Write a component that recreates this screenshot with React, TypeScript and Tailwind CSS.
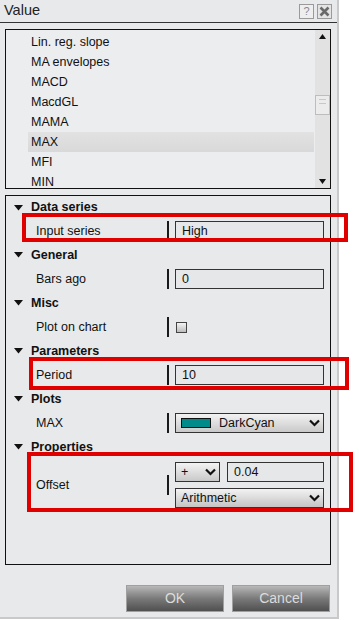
import React from "react";

const font = { fontFamily: '"Liberation Sans", Arial, sans-serif' };

function Chevron({ className = "" }: { className?: string }) {
  return (
    <svg width="11" height="8" viewBox="0 0 11 8" className={className}>
      <path d="M1 1.5 L5.5 6 L10 1.5" fill="none" stroke="#111" strokeWidth="2.2" />
    </svg>
  );
}

function Tri() {
  return (
    <svg width="9" height="6" viewBox="0 0 9 6">
      <path d="M0 0 L9 0 L4.5 5.5 Z" fill="#111" />
    </svg>
  );
}

function Header({ label, h = "h-[24px]" }: { label: string; h?: string }) {
  return (
    <div className={`flex items-center ${h}`}>
      <div className="w-[25px] flex justify-end pr-[8px]">
        <Tri />
      </div>
      <span className="font-bold text-[12.5px] text-[#111]">{label}</span>
    </div>
  );
}

function Row({ label, children, h = "h-[24px]" }: { label: string; children: React.ReactNode; h?: string }) {
  return (
    <div className={`flex items-center ${h}`}>
      <div className="w-[161px] pl-[30px] text-[12.5px] text-[#111]">{label}</div>
      <div className="w-[1.5px] h-[20px] bg-[#1a1a1a]" />
      <div className="ml-[6.5px] w-[149px]">{children}</div>
    </div>
  );
}

function Box({ value }: { value: string }) {
  return (
    <div className="h-[20px] border border-[#333] bg-[#e6e7e8] flex items-center pl-[6px] text-[12.5px] text-[#111]">
      {value}
    </div>
  );
}

const items = ["Lin. reg. slope", "MA envelopes", "MACD", "MacdGL", "MAMA", "MAX", "MFI", "MIN"];

export default function App() {
  return (
    <div className="relative w-[359px] h-[620px] bg-white overflow-hidden" style={font}>
      <div className="w-[339px] h-[619px] bg-[#e8e9ea] border-r-2 border-b-2 border-[#c9c9c9] flex flex-col">
        {/* title */}
        <div className="h-[23px] border-b border-[#333] flex items-center justify-between pl-[4px] pr-[5px]">
          <span className="text-[14.5px] text-[#222]">Value</span>
          <div className="flex gap-[3px] mt-[1px]">
            <div className="w-[15px] h-[15px] border border-[#9a9a9a] bg-[#eeeeee] flex items-center justify-center text-[11px] text-[#888]">?</div>
            <div className="w-[15px] h-[15px] border border-[#9a9a9a] bg-[#e4e4e4] flex items-center justify-center">
              <svg width="11" height="11" viewBox="0 0 11 11">
                <path d="M1.5 1.5 L9.5 9.5 M9.5 1.5 L1.5 9.5" stroke="#6a6a6a" strokeWidth="2.6" />
              </svg>
            </div>
          </div>
        </div>

        {/* list */}
        <div className="ml-[5px] mt-[6px] w-[326px] h-[160px] border border-[#111] bg-[#ecedee] flex overflow-hidden">
          <div className="flex-1 pt-[2px] pl-[22px] pr-[1px]">
            {items.map((it) => (
              <div
                key={it}
                className={`h-[20px] flex items-center pl-[3px] text-[12.5px] text-[#111] ${
                  it === "MAX" ? "bg-gradient-to-b from-[#e2e2e2] to-[#d9d9d9]" : ""
                }`}
              >
                {it}
              </div>
            ))}
          </div>
          <div className="w-[15px] bg-[#e2e2e2] flex flex-col items-center justify-between py-[4px]">
            <svg width="7" height="5" viewBox="0 0 7 5">
              <path d="M0 5 L7 5 L3.5 0 Z" fill="#111" />
            </svg>
            <div className="flex-1 w-full relative">
              <div className="absolute left-0 right-0 top-[56px] h-[20px] border border-[#bdbdbd] bg-[#ececec] flex flex-col gap-[3px] pt-[3px] px-[3px]">
                <div className="h-px bg-[#c8c8c8]" />
                <div className="h-px bg-[#c8c8c8]" />
              </div>
            </div>
            <svg width="7" height="5" viewBox="0 0 7 5">
              <path d="M0 0 L7 0 L3.5 5 Z" fill="#111" />
            </svg>
          </div>
        </div>

        {/* property grid */}
        <div className="ml-[5px] mt-[6px] w-[326px] h-[370px] border border-[#111] bg-[#e8e9ea]">
          <Header label="Data series" h="h-[23px]" />
          <Row label="Input series">
            <Box value="High" />
          </Row>
          <Header label="General" />
          <Row label="Bars ago">
            <Box value="0" />
          </Row>
          <Header label="Misc" />
          <Row label="Plot on chart">
            <div className="w-[11px] h-[11px] border border-[#444] bg-gradient-to-b from-[#f4f4f4] to-[#bdbdbd] ml-[1px]" />
          </Row>
          <Header label="Parameters" />
          <Row label="Period">
            <Box value="10" />
          </Row>
          <Header label="Plots" />
          <Row label="MAX">
            <div className="h-[20px] border border-[#333] bg-gradient-to-b from-[#f3f3f3] to-[#c9c9c9] flex items-center pl-[5px] pr-[3px]">
              <div className="w-[30px] h-[10px] border border-[#111] bg-[#008b8b]" />
              <span className="ml-[8px] text-[12.5px] text-[#111] flex-1">DarkCyan</span>
              <Chevron />
            </div>
          </Row>
          <Header label="Properties" />
          <Row label="Offset" h="h-[52px]">
            <div className="flex flex-col gap-[6px]">
              <div className="flex gap-[7px]">
                <div className="w-[45px] h-[20px] border border-[#333] bg-gradient-to-b from-[#f3f3f3] to-[#c9c9c9] flex items-center justify-between pl-[5px] pr-[3px] text-[12.5px] text-[#111]">
                  <span>+</span>
                  <Chevron />
                </div>
                <div className="flex-1">
                  <Box value="0.04" />
                </div>
              </div>
              <div className="h-[20px] border border-[#333] bg-gradient-to-b from-[#f3f3f3] to-[#c4c4c4] flex items-center justify-between pl-[5px] pr-[3px] text-[12.5px] text-[#111]">
                <span>Arithmetic</span>
                <Chevron />
              </div>
            </div>
          </Row>
        </div>

        {/* buttons */}
        <div className="flex justify-end gap-[8px] mt-[20px] pr-[7px]">
          <div className="w-[98px] h-[27px] border border-[#a0a0a0] bg-gradient-to-b from-[#b8b8b8] via-[#7a7a7a] to-[#505050] flex items-center justify-center text-[14px] text-[#dcdcdc]">
            OK
          </div>
          <div className="w-[98px] h-[27px] border border-[#a0a0a0] bg-gradient-to-b from-[#b8b8b8] via-[#7a7a7a] to-[#505050] flex items-center justify-center text-[14px] text-[#dcdcdc]">
            Cancel
          </div>
        </div>
      </div>

      {/* red annotation boxes */}
      <div className="absolute left-[22px] top-[213px] w-[326px] h-[29px] border-[4px] border-[#e00000]" />
      <div className="absolute left-[29px] top-[357px] w-[320px] h-[33px] border-[4px] border-[#e00000]" />
      <div className="absolute left-[27px] top-[452px] w-[326px] h-[60px] border-[4px] border-[#e00000]" />
    </div>
  );
}
